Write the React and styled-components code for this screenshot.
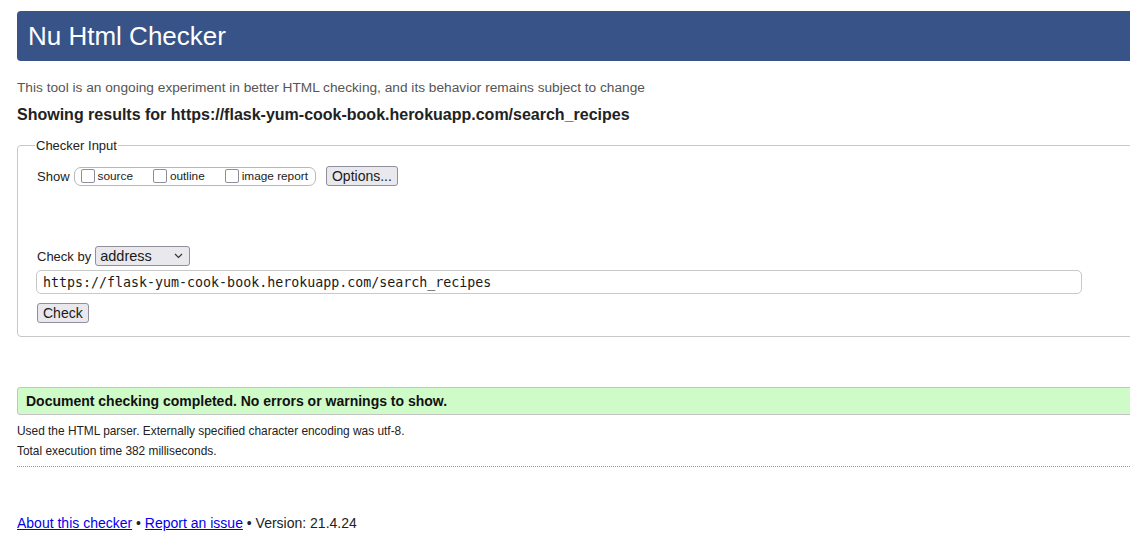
import React from "react";
import styled, { createGlobalStyle } from "styled-components";

const Global = createGlobalStyle`
  html, body { margin: 0; padding: 0; background: #fff; overflow: hidden; }
  body { font-family: "Liberation Sans", Arial, sans-serif; color: #222; }
`;

const Page = styled.div`
  width: 1125px;
  padding: 11px 0 0 17px;
`;

const Header = styled.h1`
  margin: 0;
  height: 50px;
  display: flex;
  align-items: center;
  padding-left: 11px;
  background: #375388;
  color: #fff;
  font-size: 26px;
  font-weight: normal;
  border-radius: 4px;
`;

const Intro = styled.p`
  margin: 19px 0 0;
  font-size: 13.7px;
  line-height: 16px;
  color: #555;
`;

const Results = styled.h2`
  margin: 9px 0 0;
  font-size: 16px;
  line-height: 20px;
  font-weight: bold;
  color: #222;
`;

const Fieldset = styled.fieldset`
  margin: 13px 0 0;
  padding: 13px 18px 13px 19px;
  border: 1px solid #c8c8c8;
  border-radius: 4px;
  min-height: 0;
`;

const Legend = styled.legend`
  font-size: 13px;
  padding: 0 1px;
  margin-left: -2px;
  color: #222;
`;

const Row = styled.div`
  display: flex;
  align-items: center;
  gap: ${(p) => p.$gap || 4}px;
  margin-top: ${(p) => p.$mt || 0}px;
  font-size: 13px;
`;

const CheckGroup = styled.div`
  display: flex;
  align-items: center;
  height: 17px;
  border: 1px solid #b8b8b8;
  border-radius: 7px;
  padding: 0 7px 0 6px;
  gap: 20px;
`;

const CheckLabel = styled.label`
  display: flex;
  align-items: center;
  gap: 3px;
  font-size: 11.8px;
  color: #222;
`;

const Box = styled.span`
  width: 12px;
  height: 12px;
  border: 1px solid #8f8f9d;
  border-radius: 2px;
  background: #fff;
`;

const Button = styled.button`
  font-family: "Liberation Sans", Arial, sans-serif;
  font-size: 14px;
  color: #1a1a1a;
  background: #e9e9ed;
  border: 1px solid #8f8f9d;
  border-radius: 3px;
  height: 20px;
  padding: 0 5px;
  margin-left: ${(p) => p.$ml || 0}px;
`;

const Select = styled.div`
  display: flex;
  align-items: center;
  justify-content: space-between;
  width: 95px;
  height: 20px;
  box-sizing: border-box;
  padding: 0 6px 0 4px;
  background: #e9e9ed;
  border: 1px solid #8f8f9d;
  border-radius: 3px;
  font-size: 14.5px;
  color: #1a1a1a;
`;

const UrlInput = styled.div`
  margin: 4px 0 0 -1px;
  width: 1046px;
  height: 24px;
  box-sizing: border-box;
  display: flex;
  align-items: center;
  padding-left: 6px;
  border: 1px solid #c8c8c8;
  border-radius: 5px;
  font-family: "DejaVu Sans Mono", "Liberation Mono", monospace;
  font-size: 13.3px;
  color: #1a1a1a;
`;

const Success = styled.div`
  margin-top: 50px;
  height: 28px;
  box-sizing: border-box;
  display: flex;
  align-items: center;
  padding-left: 8px;
  background: #cffbc9;
  border: 1px solid #c4c4c4;
  border-radius: 3px 0 0 3px;
  font-size: 14px;
  font-weight: bold;
  color: #111;
`;

const Detail = styled.p`
  margin: ${(p) => p.$mt || 0}px 0 0;
  font-size: 11.9px;
  line-height: 14px;
  color: #222;
`;

const Rule = styled.hr`
  margin: 8px 0 0;
  border: 0;
  border-top: 1px dotted #999;
  height: 0;
`;

const Footer = styled.p`
  margin: 47px 0 0;
  font-size: 14px;
  line-height: 18px;
  color: #222;
`;

const Link = styled.a`
  color: #0000ee;
  text-decoration: underline;
`;

const Chevron = () => (
  <svg width="9" height="6" viewBox="0 0 9 6">
    <path d="M1 1l3.5 3.5L8 1" fill="none" stroke="#333" strokeWidth="1.2" />
  </svg>
);

export default function App() {
  return (
    <>
      <Global />
      <Page>
        <Header>Nu Html Checker</Header>
        <Intro>
          This tool is an ongoing experiment in better HTML checking, and its behavior remains subject to change
        </Intro>
        <Results>Showing results for https://flask-yum-cook-book.herokuapp.com/search_recipes</Results>
        <Fieldset>
          <Legend>Checker Input</Legend>
          <Row>
            <span>Show</span>
            <CheckGroup>
              <CheckLabel><Box />source</CheckLabel>
              <CheckLabel><Box />outline</CheckLabel>
              <CheckLabel><Box />image report</CheckLabel>
            </CheckGroup>
            <Button $ml={6}>Options...</Button>
          </Row>
          <Row $mt={60}>
            <span>Check by</span>
            <Select>
              <span>address</span>
              <Chevron />
            </Select>
          </Row>
          <UrlInput>https://flask-yum-cook-book.herokuapp.com/search_recipes</UrlInput>
          <Row $mt={9}>
            <Button>Check</Button>
          </Row>
        </Fieldset>
        <Success>Document checking completed. No errors or warnings to show.</Success>
        <Detail $mt={9}>Used the HTML parser. Externally specified character encoding was utf-8.</Detail>
        <Detail $mt={6}>Total execution time 382 milliseconds.</Detail>
        <Rule />
        <Footer>
          <Link href="#">About this checker</Link> • <Link href="#">Report an issue</Link> • Version: 21.4.24
        </Footer>
      </Page>
    </>
  );
}
